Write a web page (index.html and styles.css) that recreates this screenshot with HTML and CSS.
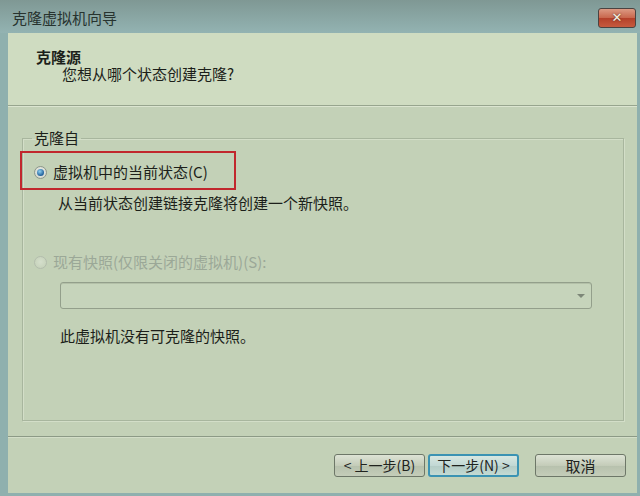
FILE: index.html
```html
<!DOCTYPE html>
<html lang="zh-CN">
<head>
    <meta charset="UTF-8">
    <title>克隆虚拟机向导</title>
    <link rel="stylesheet" href="styles.css">
</head>
<body>
    <div class="Window">
        <div class="TitleBar">
            <span class="caption">克隆虚拟机向导</span>
            <span class="close">&#x2715;</span>
        </div>
        <div class="Client">
            <div class="Header">
                <div class="head-title">克隆源</div>
                <div class="head-sub">您想从哪个状态创建克隆?</div>
            </div>
            <div class="Body">
                <fieldset class="group">
                    <legend>克隆自</legend>
                    <div class="mark"></div>
                    <div class="radio-row">
                        <span class="radio checked"></span>
                        <span>虚拟机中的当前状态(C)</span>
                    </div>
                    <div class="desc">从当前状态创建链接克隆将创建一个新快照。</div>
                    <div class="radio-row off">
                        <span class="radio"></span>
                        <span>现有快照(仅限关闭的虚拟机)(S):</span>
                    </div>
                    <div class="combo"><span class="arrow"></span></div>
                    <div class="note">此虚拟机没有可克隆的快照。</div>
                </fieldset>
            </div>
            <div class="Footer">
                <span class="btn">&lt; 上一步(B)</span>
                <span class="btn focus">下一步(N) &gt;</span>
                <span class="btn cancel">取消</span>
            </div>
        </div>
    </div>
</body>
</html>
```

FILE: styles.css
```css
body{
    margin: 0;
    font-family: "Noto Sans CJK SC", "Liberation Sans", sans-serif;
    font-size: 15px;
    color: #1c1f1a;
}
.Window{
    width: 640px;
    height: 496px;
    display: flex;
    flex-direction: column;
    background: #8fb0ae;   /* 窓枠 */
}
.TitleBar{
    height: 33px;
    flex: none;
    display: flex;
    align-items: center;
    justify-content: space-between;
    padding: 0 4px 4px 12px;
    box-sizing: border-box;
    background: linear-gradient(#7f9894, #93b3b2);
}
.caption{
    color: #27332f;
    font-size: 15px;
    padding-top: 5px;
}
.close{
    width: 36px;
    height: 18px;
    margin-top: 6px;
    border: 1px solid #4b4341;
    border-radius: 3px;
    background: linear-gradient(#dc9a83 0%, #c8664c 50%, #b4412a 52%, #c65a3e 100%);
    color: #f3f0e0;
    font-family: "DejaVu Sans", sans-serif;
    font-size: 13px;
    font-weight: bold;
    line-height: 18px;
    text-align: center;
    text-shadow: 0 0 2px #4a2a20;
}
.Client{
    flex: 1;
    margin: 0 3px 3px 8px;
    display: flex;
    flex-direction: column;
    background: #c3d1b7;
}
.Header{
    height: 73px;
    flex: none;
    box-sizing: border-box;
    padding: 15px 0 0 28px;
    background: #cfdcc1;
    border-bottom: 1px solid #97a58e;
    box-shadow: 0 1px 0 #dbe5d0;
}
.head-title{
    font-weight: bold;
    line-height: 17px;
}
.head-sub{
    line-height: 17px;
    padding-left: 26px;
}
.Body{
    padding: 22px 13px 0 14px;
}
.group{
    position: relative;
    margin: 0;
    padding: 0 0 74px 11px;
    border: 1px solid #a8b69e;
    box-shadow: inset 1px 1px 0 #d3dec8, 1px 1px 0 #d3dec8;
}
.group legend{
    padding: 0 2px;
    margin-left: -2px;
    line-height: 20px;
}
.mark{
    position: absolute;
    left: -3px;
    top: 3px;
    width: 212px;
    height: 35px;
    border: 2px solid #c1272d;
}
.radio-row{
    display: flex;
    align-items: center;
    gap: 6px;
    line-height: 20px;
    margin-top: 14px;
}
.radio{
    width: 13px;
    height: 13px;
    box-sizing: border-box;
    border-radius: 50%;
    border: 1px solid #8d968a;
    background: radial-gradient(circle at 50% 45%, #f2f4ee, #c9cfc4);
    position: relative;
}
.radio.checked::after{
    content: "";
    position: absolute;
    left: 2px;
    top: 2px;
    width: 7px;
    height: 7px;
    border-radius: 50%;
    background: radial-gradient(circle at 40% 35%, #8fd0f0, #1f5f9a 70%);
}
.desc{
    line-height: 20px;
    margin: 11px 0 0 24px;
}
.off{
    color: #9ba897;
    margin-top: 39px;
}
.off .radio{
    border-color: #b3bdad;
    background: radial-gradient(circle at 50% 45%, #d5dfcc, #c2cfb6);
}
.combo{
    height: 27px;
    box-sizing: border-box;
    margin: 10px 31px 0 26px;
    border: 1px solid #939f8b;
    border-radius: 3px;
    background: #c6d4bb;
    box-shadow: inset 0 1px 0 #b3c0a8;
    position: relative;
}
.arrow{
    position: absolute;
    right: 6px;
    top: 11px;
    border-left: 4px solid transparent;
    border-right: 4px solid transparent;
    border-top: 4px solid #7d8778;
}
.note{
    line-height: 20px;
    margin: 17px 0 0 26px;
}
.Footer{
    margin-top: 15px;
    border-top: 1px solid #8c9a86;
    box-shadow: inset 0 1px 0 #d3dec8;
    display: flex;
    justify-content: flex-end;
    padding: 17px 11px 0 0;
    gap: 3px;
}
.btn{
    width: 91px;
    height: 23px;
    box-sizing: border-box;
    border: 1px solid #6d7768;
    border-radius: 3px;
    background: linear-gradient(#dde3d5, #c4ccb9 50%, #b7c1ad 52%, #c4cdb9);
    text-align: center;
    font-size: 14px;
    line-height: 21px;
    color: #20231e;
}
.focus{
    border: 2px solid #3b93b3;
    background: linear-gradient(#d8e7e1, #c2d8d4 50%, #b4ccc6 52%, #c4dad3);
    line-height: 19px;
}
.cancel{
    margin-left: 13px;
    font-size: 15px;
}
```
